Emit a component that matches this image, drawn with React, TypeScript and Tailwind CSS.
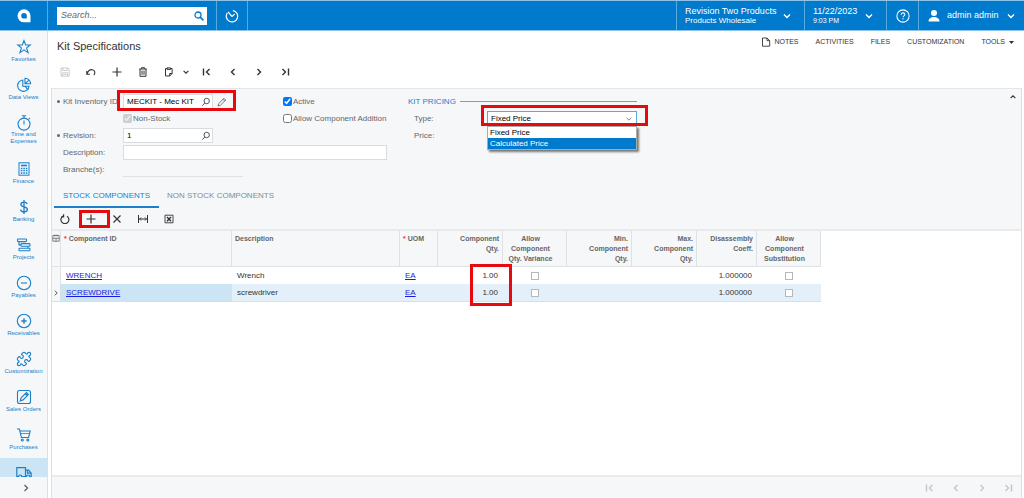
import type { ReactNode } from "react";
import { Puzzle } from "lucide-react";

interface IconProps {
  children: ReactNode;
  className?: string;
  box?: string;
  width?: number;
}

function Icon({ children, className = "size-4", box = "0 0 16 16", width = 1.1 }: IconProps) {
  return (
    <svg viewBox={box} className={`shrink-0 ${className}`} fill="none" stroke="currentColor" strokeWidth={width} aria-hidden="true">
      {children}
    </svg>
  );
}

const icons = {
  star: (
    <Icon>
      <path d="M8 1.6 9.7 6h4.5l-3.6 2.9 1.5 4.7L8 10.9l-4.1 2.7 1.5-4.7L1.8 6h4.5z" />
    </Icon>
  ),
  pie: (
    <Icon>
      <path d="M6.8 3A5.7 5.7 0 1 0 13 9.2H6.8z" />
      <path d="M9 1.3v5.5h5.6A5.6 5.6 0 0 0 9 1.3zM9 6.8l4-3.6M9 9.2l3 3.6" />
    </Icon>
  ),
  stopwatch: (
    <Icon>
      <circle cx="8" cy="9.1" r="6" />
      <path d="M5.9 .8h4.2M8 .8v2.3M8 5.600v4M12.500 4.400l1.500-1.300" />
    </Icon>
  ),
  calculator: (
    <Icon width={1}>
      <rect x="3" y="1.8" width="10" height="12.4" />
      <path d="M5 4.5h6" strokeWidth="1.6" />
      <path d="M4.8 7.5h6.6M4.8 9.7h6.6M4.8 12h6.6" strokeDasharray="1.6 .9" strokeWidth="1.3" />
    </Icon>
  ),
  dollar: (
    <Icon width={1.3}>
      <path d="M8 1v14M11.2 5C10.8 3.7 9.6 3.1 8 3.1c-1.8 0-3.1.8-3.1 2.3C4.9 8.7 11.4 7.2 11.4 10.6c0 1.5-1.4 2.4-3.4 2.4-1.9 0-3.2-.8-3.5-2.3" />
    </Icon>
  ),
  bars: (
    <Icon width={1.1}>
      <rect x="1.5" y="2" width="9" height="2.6" rx=".8" />
      <rect x="5" y="6.6" width="9" height="2.6" rx=".8" />
      <rect x="3" y="11.2" width="11" height="2.6" rx=".8" />
      <path d="M3 4.6v3.3h2M12 9.2v2" />
    </Icon>
  ),
  minus: (
    <Icon>
      <circle cx="8" cy="8" r="6.7" />
      <path d="M4.8 8h6.4" />
    </Icon>
  ),
  plusCircle: (
    <Icon>
      <circle cx="8" cy="8" r="6.7" />
      <path d="M5.3 8h5.4M8 5.3v5.4" strokeWidth="1.4" />
    </Icon>
  ),
  compose: (
    <Icon>
      <rect x="1.5" y="1.5" width="13" height="13" rx="2" />
      <path d="m4.2 11.8.9-2.9 5.3-5.3 2 2-5.3 5.3z" />
      <path d="m9.5 4.6 2 2" strokeWidth="1.6" />
    </Icon>
  ),
  cart: (
    <Icon>
      <path d="M1 2h2.4l2 8.500h7.200L14.200 4H4" />
      <path d="M4.5 6.5h9" strokeWidth=".8" />
      <circle cx="6.3" cy="13" r="1" />
      <circle cx="11.8" cy="13" r="1" />
    </Icon>
  ),
  truck: (
    <Icon width={1.2}>
      <path d="M2.500 11.500H.8V2.600h8.700v8.900H6M9.500 5.200h3.200l2.500 2.900v3.400h-1.400M9.500 11.500h1M11.500 5.400v2.800h3.500" />
      <circle cx="4.200" cy="11.600" r="1.600" />
      <circle cx="12.100" cy="11.600" r="1.600" />
    </Icon>
  ),
};

const modules = [
  { label: "Favorites", icon: icons.star },
  { label: "Data Views", icon: icons.pie },
  { label: "Time and Expenses", icon: icons.stopwatch },
  { label: "Finance", icon: icons.calculator },
  { label: "Banking", icon: icons.dollar },
  { label: "Projects", icon: icons.bars },
  { label: "Payables", icon: icons.minus },
  { label: "Receivables", icon: icons.plusCircle },
  { label: "Customization", icon: <Puzzle className="size-4" strokeWidth={1.7} /> },
  { label: "Sales Orders", icon: icons.compose },
  { label: "Purchases", icon: icons.cart },
];

function Chevron({ dir, className = "size-2.5", width = 1.4 }: { dir: "up" | "down" | "left" | "right" | "first" | "last"; className?: string; width?: number }) {
  const paths = {
    up: "M2 6.5 5 3.5 8 6.5",
    down: "M2 3.5 5 6.5 8 3.5",
    left: "M6.5 2 3.5 5 6.5 8",
    right: "M3.5 2 6.5 5 3.5 8",
    first: "M1.5 1.5v7M7.5 2l-3 3 3 3",
    last: "M8.5 1.5v7M2.5 2l3 3-3 3",
  };
  return (
    <Icon box="0 0 10 10" className={className} width={width}>
      <path d={paths[dir]} />
    </Icon>
  );
}

function Magnifier() {
  return (
    <Icon box="0 0 10 10" className="size-2.5" width={1}>
      <circle cx="5.7" cy="4" r="2.7" />
      <path d="M3.8 6 1.3 8.7" />
    </Icon>
  );
}

function ToolButton({ label, disabled, children }: { label: string; disabled?: boolean; children: ReactNode }) {
  return (
    <button
      type="button"
      aria-label={label}
      disabled={disabled}
      className="relative flex h-5 w-[26px] items-center justify-center text-[#333] disabled:text-[#c4c7ca]"
    >
      {children}
    </button>
  );
}

const plus = (
  <Icon box="0 0 10 10" className="size-2.5" width={1.2}>
    <path d="M5 .5v9M.5 5h9" />
  </Icon>
);

// Red highlight frame drawn over a control
function Frame({ className }: { className: string }) {
  return <span className={`pointer-events-none absolute z-20 border-3 border-[#e60a0f] ${className}`} />;
}

function TopBar() {
  return (
    <header className="flex h-[31px] shrink-0 items-stretch border-y border-[#8cc3ea] bg-[#007acc] text-white">
      <a href="#home" aria-label="Home" className="flex w-12 items-center justify-center border-r border-[#5aa9df]">
        <svg viewBox="0 0 14 14" className="size-3.5" aria-hidden="true">
          <path d="M7 .3A6.500 6.500 0 0 1 13.500 6.800V13.300H7A6.500 6.500 0 0 1 7 .3z" fill="#fff" />
          <path d="M7 4a2.800 2.800 0 1 0 0 5.600h2.800V6.800A2.800 2.800 0 0 0 7 4z" fill="#007acc" />
        </svg>
      </a>
      <div className="flex w-[169px] items-center border-r border-[#5aa9df] pl-[9px]">
        <label className="flex h-[18px] w-[150px] items-center bg-white pr-[3px] pl-1 text-[#007acc]">
          <input
            type="search"
            aria-label="Search"
            placeholder="Search..."
            className="min-w-0 flex-1 text-[9px] italic outline-none placeholder:text-[#666]"
          />
          <Icon box="0 0 10 10" className="size-2.5" width={1.3}>
            <circle cx="4" cy="4" r="3" />
            <path d="m6.2 6.2 3.2 3.2" strokeWidth="1.7" />
          </Icon>
        </label>
      </div>
      <button type="button" aria-label="Recent" className="flex w-[31px] items-center justify-center border-r border-[#5aa9df]">
        <Icon className="size-3.5" width={1.4}>
          <path d="M9 1.800a6.500 6.500 0 1 1-6.300 2.600M3.600 3.400 8 8.600M8 8.600l3-2.700" />
        </Icon>
      </button>
      <div className="flex-1" />
      <button type="button" className="flex w-32 items-center justify-between border-l border-[#5aa9df] pr-3 pl-2 text-left">
        <span>
          <span className="block text-[9px] leading-[10px]">Revision Two Products</span>
          <span className="block text-[8px] leading-[10px]">Products Wholesale</span>
        </span>
        <Chevron dir="down" className="size-2.5" />
      </button>
      <button type="button" className="flex w-[82px] items-center justify-between border-l border-[#5aa9df] pr-3 pl-2 text-left">
        <span>
          <span className="block text-[9px] leading-[10px]">11/22/2023</span>
          <span className="block text-[7px] leading-[10px]">9:03 PM</span>
        </span>
        <Chevron dir="down" className="size-2.5" />
      </button>
      <button type="button" aria-label="Help" className="flex w-8 items-center justify-center border-l border-[#5aa9df]">
        <Icon className="size-3.5" width={1.2}>
          <circle cx="8" cy="8" r="7" />
          <path d="M5.9 6.5c0-1.3.9-2.1 2.1-2.1s2.1.8 2.1 1.9c0 1.500-2.100 1.600-2.100 3.200M8 10.700v1.300" />
        </Icon>
      </button>
      <button type="button" className="flex w-[106px] items-center border-l border-[#5aa9df] pr-2 pl-2 text-[9px]">
        <svg viewBox="0 0 14 14" className="size-3.5" fill="currentColor" aria-hidden="true">
          <circle cx="7" cy="4" r="3" />
          <path d="M1.5 12.5c0-3 2.5-4.5 5.5-4.5s5.5 1.5 5.5 4.5z" />
        </svg>
        <span className="ml-1.5 flex-1 text-left">admin admin</span>
        <Chevron dir="down" />
      </button>
    </header>
  );
}

function Sidebar() {
  return (
    <nav className="flex w-12 shrink-0 flex-col border-r border-[#dcdfe3] bg-[#f5f7f9] pt-px text-[#1a80cb]">
      <div className="min-h-0 flex-1 overflow-hidden">
        {modules.map((m) => (
          <a
            key={m.label}
            href="#module"
            className={`flex flex-col items-center pt-[7px] text-center text-[6px] leading-[8px] ${m.label === "Time and Expenses" ? "h-[46px]" : "h-[38px]"}`}
          >
            {m.icon}
            {m.label === "Time and Expenses" ? (
              <span className="leading-[7px]">Time and<br />Expenses</span>
            ) : (
              <span className="whitespace-nowrap">{m.label}</span>
            )}
          </a>
        ))}
        <a href="#module" aria-label="Inventory" className="flex h-[38px] justify-center bg-[#cce5f5] pt-[7px]">
          {icons.truck}
        </a>
      </div>
      <button type="button" aria-label="Expand menu" className="flex h-[21px] shrink-0 items-center justify-center pl-1 text-[#666]">
        <Chevron dir="right" />
      </button>
    </nav>
  );
}

function PageHead() {
  return (
    <div className="flex h-[57px] shrink-0 flex-col">
      <div className="flex items-start justify-between pr-2 pl-1.5">
        <h1 className="pt-2 text-[11px] leading-[14px] text-[#333]">Kit Specifications</h1>
        <div className="flex items-center gap-[17px] pt-1.5 text-[7px] leading-[10px] text-[#333]">
          <button type="button" className="flex items-center gap-[3px]">
            <Icon box="0 0 10 10" className="size-2.5" width={0.9}>
              <path d="M1.5 1h4.5l2.7 2.7V9.2H1.5zM6 1v2.7h2.7" />
            </Icon>
            NOTES
          </button>
          <button type="button">ACTIVITIES</button>
          <button type="button">FILES</button>
          <button type="button">CUSTOMIZATION</button>
          <button type="button" className="flex items-center gap-1">
            TOOLS
            <svg viewBox="0 0 5 3" className="h-[3px] w-[5px]" fill="currentColor" aria-hidden="true">
              <path d="M0 0h5L2.5 3z" />
            </svg>
          </button>
        </div>
      </div>
      <div className="flex pt-[9px] pl-px">
        <ToolButton label="Save" disabled>
          <Icon box="0 0 10 10" className="size-2.5" width={0.9}>
            <path d="M1 1h7l1.2 1.2V9.2H1zM2.8 1v2.5h4.5V1M2.6 9V5.8h5V9M3.5 7.4h3" />
          </Icon>
        </ToolButton>
        <ToolButton label="Undo">
          <Icon box="0 0 10 10" className="size-2.5" width={1.1}>
            <path d="M.8 4v3.2H4M1 7c1-3 3-4.6 5.2-4.3C9 3.1 9.700 6.200 7.800 8" />
          </Icon>
        </ToolButton>
        <ToolButton label="Add">{plus}</ToolButton>
        <ToolButton label="Delete">
          <Icon box="0 0 10 10" className="size-2.5" width={1}>
            <path d="M1.2 2h7.6M3.5 1.8V.7h3v1.1M2 2v7.3h6V2M4 3.6v4.2M6 3.6v4.2" />
          </Icon>
        </ToolButton>
        <ToolButton label="Copy">
          <Icon box="0 0 10 10" className="size-2.5" width={1}>
            <path d="M3 1.5H1.5V9H5M3 .9h3.5v1.5H3zM6.5 1.5h1.6v5L5.7 9H5M8.1 6.5H5.7V9" />
          </Icon>
        </ToolButton>
        <button type="button" aria-label="Copy options" className="flex w-3 items-center text-[#333]">
          <Chevron dir="down" className="size-2" width={1.5} />
        </button>
        <ToolButton label="First record"><Chevron dir="first" /></ToolButton>
        <ToolButton label="Previous record"><Chevron dir="left" /></ToolButton>
        <ToolButton label="Next record"><Chevron dir="right" /></ToolButton>
        <ToolButton label="Last record"><Chevron dir="last" /></ToolButton>
      </div>
    </div>
  );
}

function Label({ htmlFor, required, children }: { htmlFor: string; required?: boolean; children: ReactNode }) {
  return (
    <label htmlFor={htmlFor} className="flex w-[66px] shrink-0 items-center whitespace-nowrap">
      <span className="w-1.5 shrink-0">{required && <span className="block size-[3px] rounded-full bg-[#666]" />}</span>
      {children}
    </label>
  );
}

function Selector({ id, value }: { id: string; value: string }) {
  return (
    <span className="flex h-[15px] w-[90px] items-center border border-[#d9dcdf] bg-white pr-px pl-[3px] text-[#555]">
      <input id={id} defaultValue={value} className="min-w-0 flex-1 text-[8px] text-black outline-none" />
      <Magnifier />
    </span>
  );
}

function Check({ label, checked, disabled }: { label: string; checked?: boolean; disabled?: boolean }) {
  return (
    <label className="flex h-[17px] items-center gap-px whitespace-nowrap">
      <input type="checkbox" defaultChecked={checked} disabled={disabled} className="size-[9px]" />
      {label}
    </label>
  );
}

function KitForm() {
  return (
    <section className="relative flex h-[98px] shrink-0 items-start border-t border-[#e3e5e8] bg-[#f5f7f9] pt-1 pl-[5px] text-[8px] text-[#666]">
      <div className="w-[226px] shrink-0">
        <div className="relative flex h-[17px] items-center">
          <Label htmlFor="kit" required>Kit Inventory ID:</Label>
          <Selector id="kit" value="MECKIT - Mec KIT" />
          <button type="button" aria-label="Edit kit" className="ml-1 text-[#666]">
            <Icon box="0 0 10 10" className="size-2.5" width={0.9}>
              <path d="m1 9 .6-2.3L7 1.3l1.7 1.7L3.3 8.4zM6 2.3 7.7 4" />
            </Icon>
          </button>
          <Frame className="-top-[3px] left-[60px] h-[21px] w-[119px]" />
        </div>
        <div className="pl-[66px]">
          <Check label="Non-Stock" checked disabled />
        </div>
        <div className="flex h-[17px] items-center">
          <Label htmlFor="rev" required>Revision:</Label>
          <Selector id="rev" value="1" />
        </div>
        <div className="flex h-[17px] items-center">
          <Label htmlFor="desc">Description:</Label>
          <input id="desc" className="h-[15px] w-[264px] shrink-0 border border-[#d9dcdf] bg-white px-1 outline-none" />
        </div>
        <div className="flex h-[17px] items-center">
          <Label htmlFor="branch">Branche(s):</Label>
          <input id="branch" readOnly className="h-[15px] w-[120px] border-b border-[#dfe2e5] outline-none" />
        </div>
      </div>
      <div className="w-[125px] shrink-0">
        <Check label="Active" checked />
        <Check label="Allow Component Addition" />
      </div>
      <div className="w-[229px] shrink-0">
        <h2 className="flex h-[17px] items-center gap-1 whitespace-nowrap text-[#1a80cb] after:h-px after:flex-1 after:bg-[#5aa9df]">KIT PRICING</h2>
        <div className="relative flex h-[17px] items-center pl-1.5">
          <label htmlFor="type" className="w-[73px]">Type:</label>
          <span className="relative flex-1">
            <select id="type" className="block h-[15px] w-full appearance-none border border-[#5aa9df] bg-white pl-[3px] text-[8px] leading-[13px] text-black outline-none">
              <option>Fixed Price</option>
              <option>Calculated Price</option>
            </select>
            <Chevron dir="down" className="pointer-events-none absolute top-1 right-1 size-2" width={1} />
            <ul role="listbox" aria-label="Type" className="absolute top-[15px] left-0 z-10 w-full border border-[#aaa] bg-white text-[8px] leading-[11px] text-black shadow-[2px_2px_2px_#777]">
              <li role="option" aria-selected="false" className="px-0.5">Fixed Price</li>
              <li role="option" aria-selected="true" className="bg-[#007acc] px-0.5 text-white">Calculated Price</li>
            </ul>
          </span>
          <Frame className="-top-[5px] left-[73px] h-[21px] w-[167px]" />
        </div>
        <div className="flex h-[17px] items-center pl-1.5">Price:</div>
      </div>
      <button type="button" aria-label="Collapse" className="absolute top-1 right-1 text-[#333]">
        <Chevron dir="up" className="size-2" />
      </button>
    </section>
  );
}

const rows = [
  { id: "WRENCH", description: "Wrench", uom: "EA", qty: "1.00", coeff: "1.000000" },
  { id: "SCREWDRIVE", description: "screwdriver", uom: "EA", qty: "1.00", coeff: "1.000000" },
];

function GridCheck({ label }: { label: string }) {
  return <input type="checkbox" aria-label={label} className="mx-auto block size-2 appearance-none border border-[#b5b8bb] bg-white" />;
}

function ComponentsGrid() {
  const th = "border-r border-b border-[#dfe2e5] px-[3px] pt-[3px] align-top font-bold";
  return (
    <div className="relative min-h-0 flex-1 border-t-2 border-[#e8eaec] bg-white">
      <table className="w-[769px] table-fixed border-separate border-spacing-0 text-[8px] text-[#333]">
        <colgroup>
          <col className="w-[9px]" />
          <col className="w-[171px]" />
          <col className="w-[168px]" />
          <col className="w-[38px]" />
          <col className="w-[65px]" />
          <col className="w-[64px]" />
          <col className="w-[65px]" />
          <col className="w-[65px]" />
          <col className="w-[60px]" />
          <col className="w-[64px]" />
        </colgroup>
        <thead className="bg-[#f5f7f9] text-left text-[7px] leading-[10px] text-[#666]">
          <tr className="h-9">
            <th className="border-r border-b border-[#dfe2e5] pt-[3px] align-top">
              <Icon box="0 0 8 8" className="size-2" width={0.8}>
                <path d="M.8 1.5h6.4v5.7H.8zM.8 4.3h6.4M2.8.5v2M5.2.5v2M4 4.3v2.9" />
              </Icon>
            </th>
            <th className={th}><span className="text-red-500">*</span> Component ID</th>
            <th className={th}>Description</th>
            <th className={th}><span className="text-red-500">*</span> UOM</th>
            <th className={`${th} text-right`}>Component<br />Qty.</th>
            <th className="border-r border-b border-[#dfe2e5] pt-[3px] pr-2 text-center align-top whitespace-nowrap">Allow<br />Component<br />Qty. Variance</th>
            <th className={`${th} text-right`}>Min.<br />Component<br />Qty.</th>
            <th className={`${th} text-right`}>Max.<br />Component<br />Qty.</th>
            <th className={`${th} text-right`}>Disassembly<br />Coeff.</th>
            <th className="border-r border-b border-[#dfe2e5] pt-[3px] pr-2 text-center align-top">Allow<br />Component<br />Substitution</th>
          </tr>
        </thead>
        <tbody className="leading-[12px]">
          {rows.map((r, i) => (
            <tr key={r.id} className={i === 1 ? "h-[18px] bg-[#e4f0f9] [&>td]:border-b [&>td]:border-[#d5dfe6]" : "h-[17px]"}>
              <td className="border-r border-[#dfe2e5] bg-[#f5f7f9] text-[#555]">{i === 1 && <Chevron dir="right" className="size-2" width={1.2} />}</td>
              <td className={i === 1 ? "bg-[#cce5f5] pl-[5px]" : "pl-[5px]"}>
                <a href="#item" className="text-[#1a1ae0] underline">{r.id}</a>
              </td>
              <td className="pl-[5px]">{r.description}</td>
              <td className="pl-[5px]">
                <a href="#uom" className="text-[#1a1ae0] underline">{r.uom}</a>
              </td>
              <td className="relative pr-[5px] text-right">
                {r.qty}
                {i === 0 && <Frame className="-top-[3px] left-8 h-[42px] w-[42px]" />}
              </td>
              <td><GridCheck label="Allow component qty. variance" /></td>
              <td />
              <td />
              <td className="pr-[5px] text-right">{r.coeff}</td>
              <td><GridCheck label="Allow component substitution" /></td>
            </tr>
          ))}
        </tbody>
      </table>
    </div>
  );
}

export default function App() {
  return (
    <div className="flex h-screen flex-col overflow-hidden bg-white font-['Liberation_Sans',Arial,sans-serif]">
      <TopBar />
      <div className="flex min-h-0 flex-1">
        <Sidebar />
        <main className="flex min-w-0 flex-1 flex-col pr-0.5 pl-[3px]">
          <PageHead />
          <div className="flex min-h-0 flex-1 flex-col border-x border-[#dcdfe3]">
            <KitForm />
            <div role="tablist" className="flex h-[22px] shrink-0 items-stretch bg-[#f5f7f9] pl-0.5 text-[8px] text-[#8a8a8a]">
              <button type="button" role="tab" aria-selected="true" className="w-[105px] border-b-2 border-[#1a80cb] text-center text-[#1a80cb]">
                STOCK COMPONENTS
              </button>
              <button type="button" role="tab" aria-selected="false" className="border-b-2 border-transparent px-2">
                NON STOCK COMPONENTS
              </button>
            </div>
            <div className="flex h-[21px] shrink-0 items-center bg-[#f5f7f9]">
              <ToolButton label="Refresh">
                <Icon box="0 0 10 10" className="size-2.5" width={1.2}>
                  <path d="M3.2 2A4 4 0 1 0 7 2.2M3.6.3v2.5H1.2" />
                </Icon>
              </ToolButton>
              <ToolButton label="Add row">
                {plus}
                <Frame className="top-px left-px h-[18px] w-[31px]" />
              </ToolButton>
              <ToolButton label="Delete row">
                <Icon box="0 0 10 10" className="size-2.5" width={1.2}>
                  <path d="m1.5 1.5 7 7M8.5 1.5l-7 7" />
                </Icon>
              </ToolButton>
              <ToolButton label="Fit to screen">
                <Icon box="0 0 10 10" className="size-2.5" width={1}>
                  <path d="M.5 1v8M9.5 1v8M1.5 5h7M3 3.5 1.5 5 3 6.5M7 3.5 8.5 5 7 6.5" />
                </Icon>
              </ToolButton>
              <ToolButton label="Export to Excel">
                <Icon box="0 0 10 10" className="size-2.5" width={0.9}>
                  <path d="M1 1.2h8v7.6H1z" />
                  <path d="m3 3 4 4.2M7 3 3 7.2" strokeWidth="1.4" />
                </Icon>
              </ToolButton>
            </div>
            <ComponentsGrid />
            <footer className="flex h-[23px] shrink-0 items-center justify-end border-t-2 border-[#e8eaec] bg-[#f5f7f9]">
              <ToolButton label="First page" disabled><Chevron dir="first" /></ToolButton>
              <ToolButton label="Previous page" disabled><Chevron dir="left" /></ToolButton>
              <ToolButton label="Next page" disabled><Chevron dir="right" /></ToolButton>
              <ToolButton label="Last page" disabled><Chevron dir="last" /></ToolButton>
            </footer>
          </div>
        </main>
      </div>
    </div>
  );
}
